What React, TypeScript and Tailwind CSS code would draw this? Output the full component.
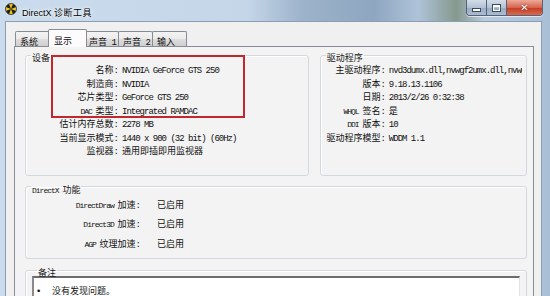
import type { ReactNode } from "react";

const CJK = /[\u3000-\u303f\u3400-\u9fff\uff00-\uffef]/;
const RUNS = /[\u3000-\u303f\u3400-\u9fff\uff00-\uffef]+|[^\u3000-\u303f\u3400-\u9fff\uff00-\uffef]+/g;

// Splits a string into CJK / Latin runs so each gets the width of the original bitmap font.
function Txt({ s, small = false }: { s: string; small?: boolean }) {
  const runs = s.match(RUNS) ?? [];
  return (
    <>
      {runs.map((r, i) =>
        CJK.test(r) ? (
          <span key={i} className="font-['Noto_Sans_CJK_SC',sans-serif] text-[9px]">
            {r}
          </span>
        ) : small ? (
          <span key={i} className="font-['Liberation_Mono',monospace] text-[8px] tracking-[-1px]">
            {r}
          </span>
        ) : (
          <span key={i} className="font-['Liberation_Mono',monospace] text-[9px] tracking-[-1px]">
            {r}
          </span>
        )
      )}
    </>
  );
}

const device: [string, string][] = [
  ["名称", "NVIDIA GeForce GTS 250"],
  ["制造商", "NVIDIA"],
  ["芯片类型", "GeForce GTS 250"],
  ["DAC 类型", "Integrated RAMDAC"],
  ["估计内存总数", "2278 MB"],
  ["当前显示模式", "1440 x 900 (32 bit) (60Hz)"],
  ["监视器", "通用即插即用监视器"],
];

const driver: [string, string][] = [
  ["主驱动程序", "nvd3dumx.dll,nvwgf2umx.dll,nvwgf2umx.dll"],
  ["版本", "9.18.13.1106"],
  ["日期", "2013/2/26 0:32:38"],
  ["WHQL 签名", "是"],
  ["DDI 版本", "10"],
  ["驱动程序模型", "WDDM 1.1"],
];

const features: [string, string][] = [
  ["DirectDraw 加速", "已启用"],
  ["Direct3D 加速", "已启用"],
  ["AGP 纹理加速", "已启用"],
];

const tabs = ["系统", "显示", "声音 1", "声音 2", "输入"];

function Group({ title, className = "", children }: { title: string; className?: string; children: ReactNode }) {
  return (
    <fieldset className={`min-w-0 border border-[#d3d9de] rounded-[3px] shadow-[inset_1px_1px_0_#fff] ${className}`}>
      <legend className="ml-[5px] px-[1px] h-[10px] leading-[10px] text-[#1a1a1a] whitespace-nowrap">
        <Txt s={title} small />
      </legend>
      {children}
    </fieldset>
  );
}

function DxIcon() {
  return (
    <svg width="12" height="12" viewBox="0 0 12 12">
      <circle cx="6" cy="6" r="5.5" fill="#1d1d1d" />
      <path d="M6 6 L4 0.8 A5.3 5.3 0 0 1 8 0.8 Z" fill="#f1c61c" />
      <path d="M6 6 L4 11.2 A5.3 5.3 0 0 0 8 11.2 Z" fill="#f1c61c" />
      <path d="M6 6 L0.8 4 A5.3 5.3 0 0 0 0.8 8 Z" fill="#f1c61c" />
      <path d="M6 6 L11.2 4 A5.3 5.3 0 0 1 11.2 8 Z" fill="#f1c61c" />
      <circle cx="6" cy="6" r="5.5" fill="none" stroke="#3a3a3a" strokeWidth="0.8" />
    </svg>
  );
}

function TitleBar() {
  return (
    <div className="h-[21px] flex items-start pl-[5px] pr-[7px]">
      <div className="mt-[3px]">
        <DxIcon />
      </div>
      <div className="ml-[5px] mt-[4px] leading-[12px] text-black [text-shadow:0_0_6px_#fff,0_0_3px_#fff]">
        <span className="font-['Liberation_Sans',sans-serif] text-[9px]">DirectX </span>
        <span className="font-['Noto_Sans_CJK_SC',sans-serif] text-[9px] tracking-[0.5px]">诊断工具</span>
      </div>
      <div className="ml-auto flex h-[16px] border border-t-0 border-[#56627a] rounded-b-[4px] overflow-hidden shadow-[0_1px_0_rgba(255,255,255,0.6)]">
        <div className="w-[20px] flex items-end justify-center pb-[4px] border-r border-[#56627a] bg-[linear-gradient(to_bottom,#d3dde8,#b2c2d3_50%,#98abc0_51%,#aabcd0)]">
          <div className="w-[7px] h-[2px] bg-white border border-[#3d4a5c] box-content -mb-px" />
        </div>
        <div className="w-[20px] flex items-center justify-center border-r border-[#56627a] bg-[linear-gradient(to_bottom,#d3dde8,#b2c2d3_50%,#98abc0_51%,#aabcd0)]">
          <div className="w-[7px] h-[6px] border border-t-2 border-white outline outline-1 outline-[#3d4a5c]" />
        </div>
        <div className="w-[35px] flex items-center justify-center bg-[linear-gradient(to_bottom,#eeaa99,#d6654f_50%,#c23b22_51%,#d86a4f)]">
          <span className="font-['DejaVu_Sans',sans-serif] font-bold text-[10px] leading-none text-white [text-shadow:0_0_2px_#5a1408]">
            ✕
          </span>
        </div>
      </div>
    </div>
  );
}

export default function App() {
  return (
    <div className="relative w-[550px] h-[296px] overflow-hidden flex flex-col bg-[linear-gradient(to_right,#c9dbec,#c4d6e8_45%,#9db3cb_55%,#8ea6c0_68%,#aec3d8_76%,#86998e_83%,#b9cbdd_88%,#a9bfd6)]">
      <TitleBar />
      <div className="flex flex-1 min-h-0 pl-[5px] pr-[8px]">
        <div className="flex-1 min-w-0 flex flex-col bg-[#f0f0f0] border border-b-0 border-[#8a9db3] pt-[7px] pl-[8px] pr-[7px]">
          {/* tab strip */}
          <div className="flex items-end h-[17px] pl-px">
            {tabs.map((t, i) =>
              i === 1 ? (
                <div
                  key={t}
                  className="relative z-10 -mx-[2px] w-[39px] h-[18px] -mb-px pl-[5px] pt-[1px] leading-[14px] whitespace-nowrap bg-[#fcfcfc] border border-b-0 border-[#898c95] rounded-t-[2px] text-[#111]"
                >
                  <Txt s={t} />
                </div>
              ) : (
                <div
                  key={t}
                  className="w-[35px] h-[15px] -ml-px first:ml-0 pl-[4px] pt-[1px] leading-[13px] whitespace-nowrap bg-[linear-gradient(to_bottom,#f3f3f3,#ebebeb_50%,#dddddd_51%,#cfcfcf)] border border-b-0 border-[#898c95] rounded-t-[2px] text-[#111]"
                >
                  <Txt s={t} />
                </div>
              )
            )}
          </div>
          {/* tab page */}
          <div className="flex-1 min-w-0 bg-[#f3f3f3] border border-b-0 border-[#898c95] pt-[3px] pl-[10px] pr-[6px] text-[#111]">
            <div className="flex gap-[11px] items-stretch">
              <Group title="设备" className="w-[285px] pt-[1px] pb-[19px]">
                {device.map(([k, v]) => (
                  <div key={k} className="flex h-[13.5px] leading-[13.5px] whitespace-nowrap">
                    <div className="w-[92px] text-right">
                      <Txt s={k} small />
                      <Txt s=":" />
                    </div>
                    <div className="ml-[4px]">
                      <Txt s={v} />
                    </div>
                  </div>
                ))}
              </Group>
              <Group title="驱动程序" className="w-[208px] pt-[1px]">
                {driver.map(([k, v]) => (
                  <div key={k} className="flex h-[13.5px] leading-[13.5px] whitespace-nowrap overflow-hidden mr-[4px]">
                    <div className="w-[64px] shrink-0 text-right">
                      <Txt s={k} small />
                      <Txt s=":" />
                    </div>
                    <div className="ml-[4px]">
                      <Txt s={v} />
                    </div>
                  </div>
                ))}
              </Group>
            </div>
            <Group title="DirectX 功能" className="mt-[6px] pt-[1px] pb-[7px]">
              {features.map(([k, v]) => (
                <div key={k} className="flex h-[19.5px] leading-[19.5px] whitespace-nowrap">
                  <div className="w-[114px] text-right">
                    <Txt s={k} small />
                    <Txt s=":" />
                  </div>
                  <div className="ml-[17px]">
                    <Txt s={v} />
                  </div>
                </div>
              ))}
            </Group>
            <Group title="备注" className="mt-[6px] px-[6px] h-[40px]">
              <div className="mt-[1px] h-[30px] bg-white border-t-2 border-l-2 border-t-[#6d6d6d] border-l-[#8a8a8a] border-r border-r-[#e3e3e3] flex items-start pt-[6px] leading-[14px]">
                <span className="ml-[2px] w-[16px] text-[9px] font-['DejaVu_Sans',sans-serif]">•</span>
                <Txt s="没有发现问题。" />
              </div>
            </Group>
          </div>
        </div>
      </div>
      {/* red annotation frame drawn over the screenshot */}
      <div className="absolute left-[51px] top-[55px] w-[194px] h-[63px] border-2 border-[#c4262e] pointer-events-none" />
    </div>
  );
}
